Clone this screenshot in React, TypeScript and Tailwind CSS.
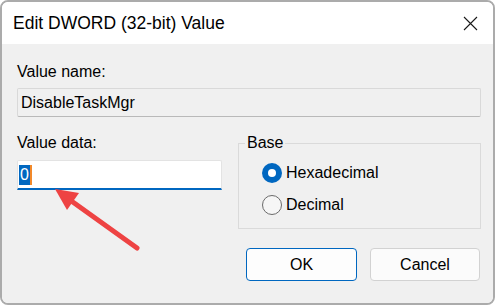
import React from 'react';

const font = { fontFamily: '"Liberation Sans", Arial, sans-serif' };

const Radio: React.FC<{ checked?: boolean; label: string }> = ({ checked, label }) => (
    <div className="flex items-center h-[20px] gap-[4px]">
        {checked ? (
            <span className="w-[20px] h-[20px] rounded-full bg-[#0067c0] flex items-center justify-center">
                <span className="w-[8px] h-[8px] rounded-full bg-white" />
            </span>
        ) : (
            <span className="w-[20px] h-[20px] rounded-full border border-[#6b6b6b] bg-[#f6f6f6]" />
        )}
        <span className="text-[16px] leading-[20px] text-black">{label}</span>
    </div>
);

const App: React.FC = () => {
    return (
        <div className="w-[497px] h-[305px] bg-white relative overflow-hidden" style={font}>
            <div className="w-[495px] h-[305px] border-2 border-[#ababab] rounded-[8px] overflow-hidden flex flex-col">
                {/* title bar */}
                <div className="h-[42px] bg-white flex items-center justify-between pl-[11px] pr-[15px]">
                    <span className="text-[17.5px] text-black">Edit DWORD (32-bit) Value</span>
                    <svg width="15" height="15" viewBox="0 0 15 15">
                        <path d="M1 1 L14 14 M14 1 L1 14" stroke="#1a1a1a" strokeWidth="1.1" fill="none" />
                    </svg>
                </div>

                {/* body */}
                <div className="flex-1 bg-[#f0f0f0] pl-[15px] pr-[12px] pt-[18px] flex flex-col">
                    <div className="text-[16px] leading-[20px] h-[20px] text-black">Value name:</div>
                    <div className="mt-[6px] h-[29px] border border-[#d9d9d9] border-b-[#b9b9b9] rounded-[2px] bg-[#f0f0f0] flex items-center pl-[3px] text-[16px] text-black">
                        DisableTaskMgr
                    </div>

                    <div className="mt-[16px] flex items-start gap-[16px]">
                        <div className="w-[205px] flex flex-col">
                            <div className="text-[16px] leading-[20px] h-[20px] text-black">Value data:</div>
                            <div className="mt-[7px] h-[30px] bg-white border border-[#e3e3e3] border-b-2 border-b-[#0067c0] rounded-t-[2px] flex items-center pl-[1px]">
                                <span className="bg-[#0067c0] text-white text-[16px] leading-[20px] px-[1px]">0</span>
                                <span className="w-[2px] h-[20px] bg-[#f2892a]" />
                            </div>
                        </div>
                        <fieldset className="flex-1 border border-[#dadada] p-0">
                            <legend className="ml-[6px] px-[2px] text-[16px] leading-[20px] text-black">Base</legend>
                            <div className="pl-[23px] pt-[10px] pb-[13px] flex flex-col gap-[12px]">
                                <Radio checked label="Hexadecimal" />
                                <Radio label="Decimal" />
                            </div>
                        </fieldset>
                    </div>

                    <div className="mt-[19px] flex justify-end gap-[13px] pr-[1px]">
                        <button className="w-[111px] h-[33px] rounded-[4px] border border-[#0067c0] bg-[#fdfdfd] text-[16px] text-black">
                            OK
                        </button>
                        <button className="w-[110px] h-[33px] rounded-[4px] border border-[#d2d2d2] bg-[#fbfbfb] text-[16px] text-black">
                            Cancel
                        </button>
                    </div>
                </div>
            </div>

            {/* red annotation arrow */}
            <svg className="absolute left-0 top-0 pointer-events-none" width="497" height="305" viewBox="0 0 497 305">
                <line x1="137" y1="248" x2="70" y2="200" stroke="#ee4343" strokeWidth="5" strokeLinecap="round" />
                <polygon points="55,189 79,193 67,210" fill="#ee4343" />
            </svg>
        </div>
    );
};

export default App;
